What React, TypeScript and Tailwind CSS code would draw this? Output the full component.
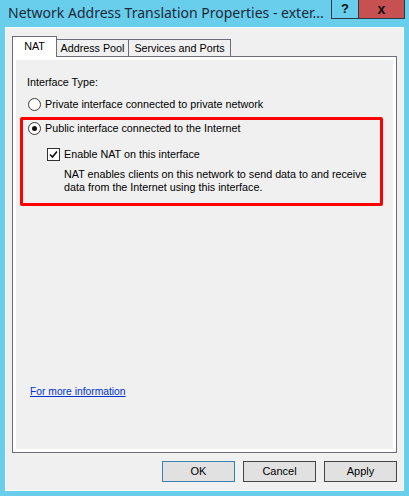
import React from 'react';

const body = { fontFamily: '"Liberation Sans", Arial, sans-serif' };

function Radio({ checked }: { checked?: boolean }) {
  return (
    <span className="w-[13px] h-[13px] rounded-full border border-[#3a3a3a] bg-white flex items-center justify-center shrink-0">
      {checked && <span className="w-[5px] h-[5px] rounded-full bg-[#111]" />}
    </span>
  );
}

function Check({ checked }: { checked?: boolean }) {
  return (
    <span className="w-[13px] h-[13px] border border-[#333] bg-white flex items-center justify-center shrink-0">
      {checked && (
        <svg width="9" height="9" viewBox="0 0 9 9">
          <path d="M1 4.5 L3.5 7 L8 1.5" fill="none" stroke="#111" strokeWidth="1.6" />
        </svg>
      )}
    </span>
  );
}

export default function App() {
  return (
    <div className="w-[409px] h-[496px] bg-[#69cdec] flex flex-col" style={body}>
      <div className="h-[27px] flex items-start">
        <div
          className="flex-1 min-w-0 overflow-hidden pl-[8px] pt-[3px] text-[14px] leading-[20px] text-[#1c2a38] whitespace-nowrap"
          style={{ fontFamily: '"Noto Sans", "Open Sans", sans-serif' }}
        >
          Network Address Translation Properties - exter...
        </div>
        <div className="flex mr-[4px] shrink-0">
          <div className="w-[28px] h-[19px] border border-[#2b3845] border-t-0 flex items-center justify-center text-[13px] font-bold text-[#111]">
            ?
          </div>
          <div className="w-[46px] h-[19px] bg-[#c75050] border border-[#2b3845] border-t-0 border-l-0 flex items-center justify-center text-[14px] font-bold text-[#111]">
            x
          </div>
        </div>
      </div>
      <div className="mx-[5px] mb-[5px] flex-1 border border-white bg-[#f0f0f0] flex flex-col px-[6px] pt-[8px] pb-[8px]">
        <div className="h-[20px] flex items-end relative z-10 text-[10.75px] text-black">
          <div className="w-[45px] h-[21px] -mb-px bg-white border border-b-0 border-[#6b6e78] flex items-center justify-center pb-[2px]">
            NAT
          </div>
          <div className="w-[72px] h-[17px] border border-b-0 border-l-0 border-[#6b6e78] bg-[#f0f0f0] flex items-center justify-center">
            Address Pool
          </div>
          <div className="w-[102px] h-[17px] border border-b-0 border-l-0 border-[#6b6e78] bg-[#f0f0f0] flex items-center justify-center">
            Services and Ports
          </div>
        </div>
        <div className="flex-1 border border-[#6b6e78] bg-white p-[3px] flex">
          <div className="flex-1 bg-[#f0f0f0] flex flex-col text-[10.75px] leading-[13px] text-black">
            <div className="mt-[16px] pl-[11px] h-[13px]">Interface Type:</div>
            <div className="mt-[9px] pl-[12px] h-[13px] flex items-center gap-[4px]">
              <Radio />
              <span>Private interface connected to private network</span>
            </div>
            <div className="mt-[6px] ml-[4px] mr-[10px] border-[3px] border-[#ff0000] rounded-[2px] pt-[2px] pb-[9px] flex flex-col">
              <div className="pl-[5px] h-[13px] flex items-center gap-[4px]">
                <Radio checked />
                <span>Public interface connected to the Internet</span>
              </div>
              <div className="mt-[13px] pl-[24px] h-[13px] flex items-center gap-[4px]">
                <Check checked />
                <span>Enable NAT on this interface</span>
              </div>
              <div className="mt-[7px] pl-[41px]">
                NAT enables clients on this network to send data to and receive
                <br />
                data from the Internet using this interface.
              </div>
            </div>
            <div className="mt-auto mb-[51px] pl-[14px] h-[13px]">
              <span className="text-[#0033cc] underline text-[10.3px]">For more information</span>
            </div>
          </div>
        </div>
        <div className="mt-[8px] flex justify-end gap-[8px] text-[11px] text-black">
          <button className="w-[73px] h-[21px] bg-[#e1e1e1] border border-[#3c7fb1] flex items-center justify-center">OK</button>
          <button className="w-[73px] h-[21px] bg-[#e1e1e1] border border-[#444] flex items-center justify-center">Cancel</button>
          <button className="w-[73px] h-[21px] bg-[#e1e1e1] border border-[#444] flex items-center justify-center">Apply</button>
        </div>
      </div>
    </div>
  );
}
